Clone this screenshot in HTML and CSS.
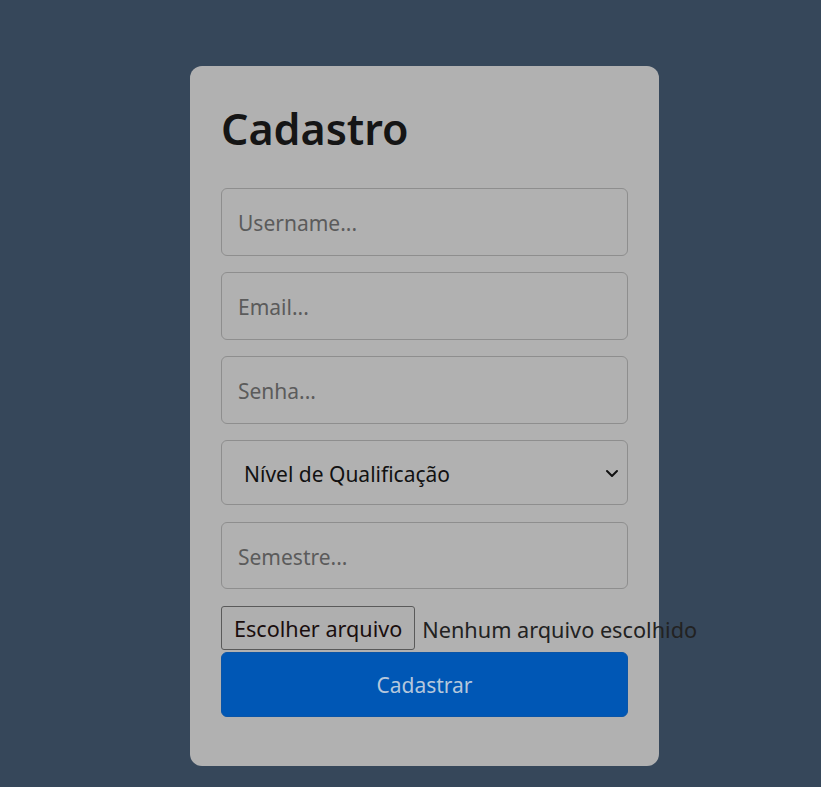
FILE: index.html
```html
<!DOCTYPE html>
<html lang="pt-BR">
<head>
<meta charset="utf-8">
<title>Cadastro</title>
<link rel="stylesheet" href="styles.css">
</head>
<body>
<main class="card">
  <h1 class="title">Cadastro</h1>
  <form class="form">
    <input class="field" type="text" placeholder="Username...">
    <input class="field" type="email" placeholder="Email...">
    <input class="field" type="password" placeholder="Senha...">
    <div class="select-wrap">
      <select class="select">
        <option>Nível de Qualificação</option>
      </select>
      <svg class="chevron" width="16" height="16" viewBox="0 0 16 16"><path d="M3 6l5 5 5-5" fill="none" stroke="#111" stroke-width="2" stroke-linecap="round" stroke-linejoin="round"/></svg>
    </div>
    <input class="field" type="text" placeholder="Semestre...">
    <div class="file-row">
      <span class="file-btn">Escolher arquivo</span>
      <span class="file-text">Nenhum arquivo escolhido</span>
    </div>
    <button class="submit" type="button">Cadastrar</button>
  </form>
</main>
</body>
</html>
```
FILE: styles.css
```css
html, body {
  margin: 0;
  padding: 0;
}
body {
  background: #36475a;
  font-family: "Noto Sans", "Open Sans", sans-serif;
  min-height: 787px;
  overflow: hidden;
}
.card {
  box-sizing: border-box;
  width: 469px;
  height: 700px;
  margin: 66px 0 0 190px;
  background: #b1b1b1;
  border-radius: 12px;
  padding: 26px 31px 48px 31px;
}
.title {
  margin: 0 0 22px 0;
  font-size: 43px;
  font-weight: 600;
  line-height: 74px;
  color: #151515;
}
.form {
  display: flex;
  flex-direction: column;
}
.field {
  box-sizing: border-box;
  width: 407px;
  height: 67.5px;
  margin-bottom: 16.5px;
  padding: 3px 16px 0 16px;
  font-family: inherit;
  font-size: 21px;
  color: #222;
  background: #b1b1b1;
  border: 1px solid #8e8e8e;
  border-radius: 6px;
  outline: none;
}
.field::placeholder {
  color: #5b5b5b;
}
.select-wrap {
  position: relative;
  width: 407px;
  height: 65px;
  margin-bottom: 16.5px;
}
.select {
  box-sizing: border-box;
  appearance: none;
  -webkit-appearance: none;
  width: 407px;
  height: 65px;
  padding: 3px 40px 0 22px;
  font-family: inherit;
  font-size: 21px;
  color: #111;
  background: #b1b1b1;
  border: 1px solid #8e8e8e;
  border-radius: 6px;
  outline: none;
}
.chevron {
  position: absolute;
  right: 8px;
  top: 25px;
  pointer-events: none;
}
.file-row {
  display: flex;
  align-items: center;
  gap: 7px;
  height: 44.5px;
  white-space: nowrap;
}
.file-btn {
  box-sizing: border-box;
  height: 44.5px;
  padding: 2px 12px 0 12px;
  display: flex;
  align-items: center;
  font-size: 21.6px;
  color: #1a0e0e;
  background: #afafaf;
  border: 1px solid #5a5a5a;
  border-radius: 3px;
}
.file-text {
  padding-top: 3px;
  font-size: 21.7px;
  color: #222;
}
.submit {
  box-sizing: border-box;
  width: 407px;
  height: 65.5px;
  margin-top: 1.5px;
  padding-top: 3px;
  font-family: inherit;
  font-size: 21px;
  color: #b5c7dc;
  background: #0057b5;
  border: 1px solid #0a55a8;
  border-radius: 6px;
}
```
